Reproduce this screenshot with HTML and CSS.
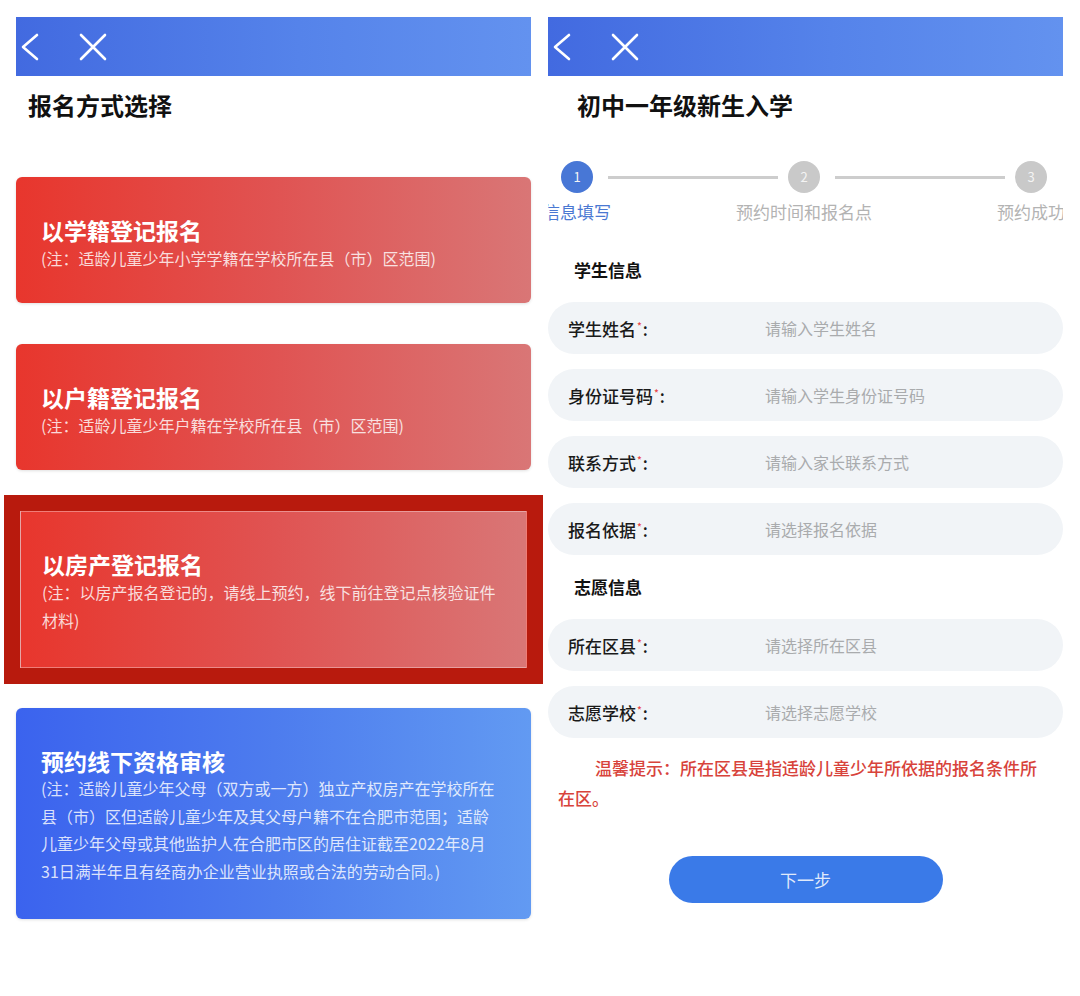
FILE: index.html
```html
<!DOCTYPE html>
<html lang="zh-CN">
<head>
  <meta charset="UTF-8">
  <meta name="viewport" content="width=device-width, initial-scale=1.0">
  <title>报名方式选择 / 初中一年级新生入学</title>
  <link rel="stylesheet" href="styles.css">
</head>
<body>
  <div class="screens">

    <!-- 报名方式选择 -->
    <div class="screen">
      <div class="topbar">
        <svg class="icon-back" width="22" height="30" viewBox="0 0 22 30"><path d="M19 3 L5 15 L19 27" fill="none" stroke="#fff" stroke-width="2.6" stroke-linecap="round" stroke-linejoin="round"/></svg>
        <svg class="icon-close" width="30" height="30" viewBox="0 0 30 30"><path d="M3 3 L27 27 M27 3 L3 27" fill="none" stroke="#fff" stroke-width="2.6" stroke-linecap="round"/></svg>
      </div>
      <h1 class="page-title">报名方式选择</h1>

      <div class="option red">
        <div class="option-title">以学籍登记报名</div>
        <div class="option-note">(注：适龄儿童少年小学学籍在学校所在县（市）区范围)</div>
      </div>

      <div class="option red">
        <div class="option-title">以户籍登记报名</div>
        <div class="option-note">(注：适龄儿童少年户籍在学校所在县（市）区范围)</div>
      </div>

      <div class="option red selected">
        <div class="option-title">以房产登记报名</div>
        <div class="option-note">(注：以房产报名登记的，请线上预约，线下前往登记点核验证件材料)</div>
      </div>

      <div class="option blue">
        <div class="option-title">预约线下资格审核</div>
        <div class="option-note">(注：适龄儿童少年父母（双方或一方）独立产权房产在学校所在县（市）区但适龄儿童少年及其父母户籍不在合肥市范围；适龄儿童少年父母或其他监护人在合肥市区的居住证截至2022年8月31日满半年且有经商办企业营业执照或合法的劳动合同。)</div>
      </div>
    </div>

    <!-- 初中一年级新生入学 -->
    <div class="screen clip">
      <div class="topbar">
        <svg class="icon-back" width="22" height="30" viewBox="0 0 22 30"><path d="M19 3 L5 15 L19 27" fill="none" stroke="#fff" stroke-width="2.6" stroke-linecap="round" stroke-linejoin="round"/></svg>
        <svg class="icon-close" width="30" height="30" viewBox="0 0 30 30"><path d="M3 3 L27 27 M27 3 L3 27" fill="none" stroke="#fff" stroke-width="2.6" stroke-linecap="round"/></svg>
      </div>
      <h1 class="page-title right">初中一年级新生入学</h1>

      <div class="steps">
        <div class="step active">
          <div class="step-dot">1</div>
          <div class="step-label">信息填写</div>
        </div>
        <div class="step-line"></div>
        <div class="step">
          <div class="step-dot">2</div>
          <div class="step-label">预约时间和报名点</div>
        </div>
        <div class="step-line"></div>
        <div class="step">
          <div class="step-dot">3</div>
          <div class="step-label">预约成功</div>
        </div>
      </div>

      <h2 class="section-title">学生信息</h2>
      <div class="field"><span class="field-label">学生姓名<i>*</i>:</span><span class="field-input">请输入学生姓名</span></div>
      <div class="field"><span class="field-label">身份证号码<i>*</i>:</span><span class="field-input">请输入学生身份证号码</span></div>
      <div class="field"><span class="field-label">联系方式<i>*</i>:</span><span class="field-input">请输入家长联系方式</span></div>
      <div class="field"><span class="field-label">报名依据<i>*</i>:</span><span class="field-input">请选择报名依据</span></div>

      <h2 class="section-title">志愿信息</h2>
      <div class="field"><span class="field-label">所在区县<i>*</i>:</span><span class="field-input">请选择所在区县</span></div>
      <div class="field"><span class="field-label">志愿学校<i>*</i>:</span><span class="field-input">请选择志愿学校</span></div>

      <p class="tip">温馨提示：所在区县是指适龄儿童少年所依据的报名条件所在区。</p>

      <div class="actions">
        <button type="button" class="btn-next">下一步</button>
      </div>
    </div>

  </div>
</body>
</html>
```

FILE: styles.css
```css
body {
  margin: 0;
  background: #fff;
  font-family: "Noto Sans CJK SC", "Noto Sans", sans-serif;
  color: #1c1c1c;
}
.screens {
  display: flex;
  gap: 17px;
  padding: 17px 0 0 16px;
}
.screen {
  width: 515px;
  flex: none;
}
.screen.clip {
  overflow: hidden;
  height: 979px;
}

/* top bar */
.topbar {
  height: 59px;
  display: flex;
  align-items: center;
  padding-left: 2px;
  background: linear-gradient(90deg, #426ae0 0%, #5583ea 55%, #6392ef 100%);
}
.icon-back {
  display: block;
}
.icon-close {
  display: block;
  margin-left: 38px;
}

.page-title {
  margin: 0;
  padding: 16px 0 0 12px;
  font-size: 24px;
  line-height: 26px;
  font-weight: 700;
  color: #111;
}
.page-title.right {
  padding-left: 29px;
}

/* option cards */
.option {
  border-radius: 6px;
  padding: 39px 30px 31px 25px;
  margin-bottom: 41px;
  color: #fff;
  box-shadow: 0 1px 3px rgba(0, 0, 0, 0.12);
}
.page-title + .option {
  margin-top: 59px;
}
.option.red {
  background: linear-gradient(90deg, #e8362d 0%, #e05352 50%, #d97676 100%);
}
.option.blue {
  background: linear-gradient(90deg, #3b63ee 0%, #4d7cee 50%, #629af2 100%);
  padding-bottom: 34px;
}
.option.selected {
  margin: 0 4px 40px;
  padding: 38px 26px 33px 21px;
  border: 1px solid rgba(255, 255, 255, 0.35);
  border-radius: 0;
  outline: 16px solid #b81a0d;
  box-shadow: none;
}
.option-title {
  font-size: 23px;
  line-height: 28px;
  font-weight: 700;
}
.option-note {
  font-size: 16px;
  line-height: 28px;
  color: rgba(255, 255, 255, 0.82);
}
.option.blue .option-note {
  line-height: 27.5px;
}

/* steps */
.steps {
  display: flex;
  align-items: flex-start;
  padding: 0 16px 0 13px;
  margin-top: 43px;
}
.step {
  width: 32px;
  display: flex;
  flex-direction: column;
  align-items: center;
  flex: none;
}
.step-dot {
  width: 32px;
  height: 32px;
  border-radius: 50%;
  background: #c9c9c9;
  color: #f4f4f4;
  font-size: 13px;
  line-height: 32px;
  text-align: center;
}
.step-label {
  margin-top: 9px;
  font-size: 17px;
  line-height: 20px;
  color: #b3b3b3;
  white-space: nowrap;
}
.step.active .step-dot {
  background: #4877d6;
}
.step.active .step-label {
  color: #4a78d2;
}
.step-line {
  flex: 1;
  height: 3px;
  margin: 15px 10px 0 15px;
  background: #cdcdcd;
}

/* form */
.section-title {
  margin: 36px 0 20px 26px;
  font-size: 17px;
  line-height: 24px;
  font-weight: 700;
  color: #111;
}
.field + .section-title {
  margin-top: 20px;
}
.field {
  height: 52px;
  border-radius: 26px;
  background: #f1f4f7;
  display: flex;
  align-items: center;
  padding-left: 20px;
  margin-bottom: 15px;
}
.field-label {
  width: 197px;
  flex: none;
  font-size: 17px;
  font-weight: 500;
  color: #1a1a1a;
}
.field-label i {
  font-style: normal;
  color: #e84545;
  font-size: 10px;
  vertical-align: 6px;
  margin: 0 1px;
}
.field-input {
  font-size: 16px;
  color: #a9abad;
}

.tip {
  margin: 0;
  padding: 0 20px 0 10px;
  text-indent: 37px;
  font-size: 17px;
  line-height: 30px;
  font-weight: 500;
  color: #d8433b;
}

.actions {
  display: flex;
  justify-content: center;
  margin-top: 43px;
}
.btn-next {
  width: 274px;
  height: 47px;
  border: none;
  border-radius: 24px;
  background: #3a7ae8;
  color: rgba(255, 255, 255, 0.85);
  font-family: inherit;
  font-size: 17px;
}
```
